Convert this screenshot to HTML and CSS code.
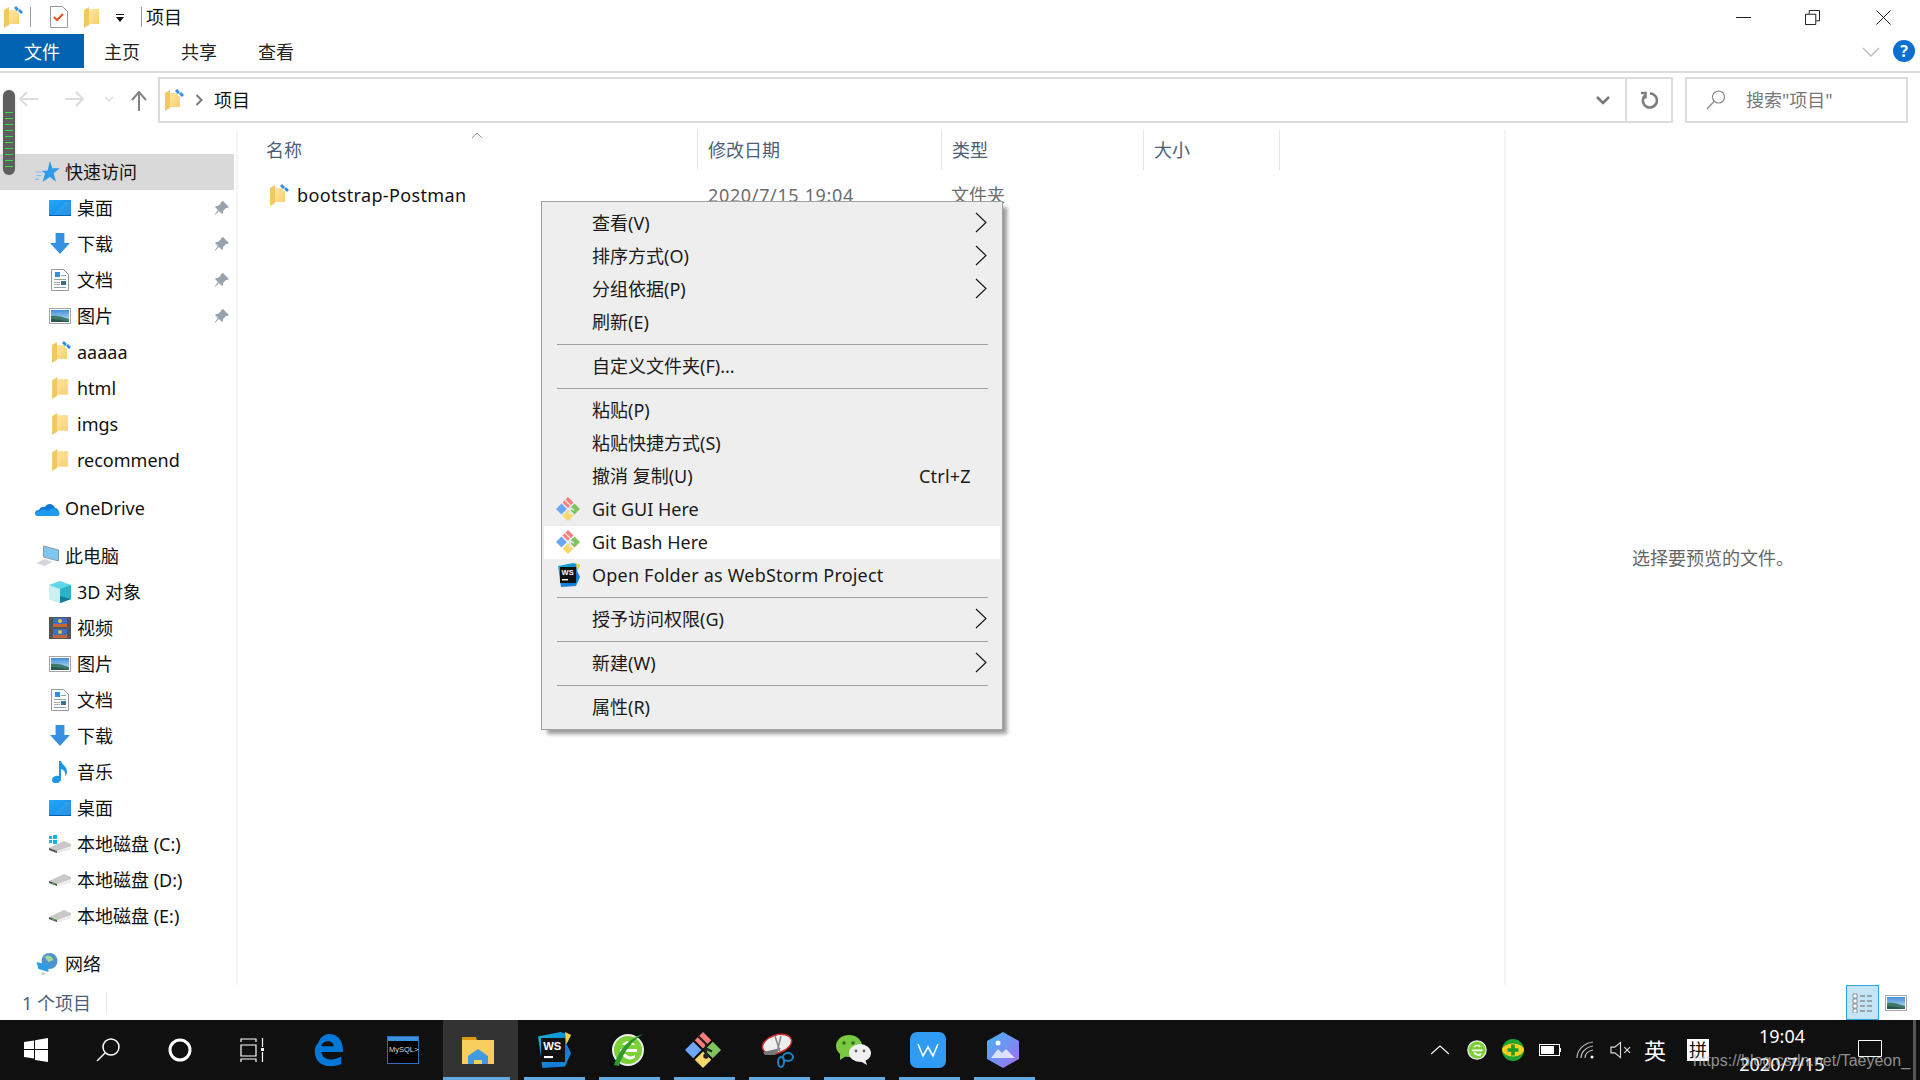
FILE: index.html
```html
<!DOCTYPE html>
<html lang="zh-CN">
<head>
<meta charset="utf-8">
<title>项目</title>
<link rel="stylesheet" href="styles.css">
</head>
<body>
<svg class="defs" width="0" height="0" aria-hidden="true">
  <defs>
    <linearGradient id="fg" x1="0" y1="0" x2="1" y2="1"><stop offset="0" stop-color="#fde6a3"/><stop offset="1" stop-color="#f8d06e"/></linearGradient>
    <linearGradient id="blue" x1="0" y1="0" x2="1" y2="1"><stop offset="0" stop-color="#29a9f5"/><stop offset="1" stop-color="#0a84e8"/></linearGradient>
    <linearGradient id="sky" x1="0" y1="0" x2="0" y2="1"><stop offset="0" stop-color="#3f8ed8"/><stop offset="1" stop-color="#cfe6f2"/></linearGradient>
    <linearGradient id="wsg" x1="0" y1="0" x2="1" y2="1"><stop offset="0" stop-color="#13b6cf"/><stop offset=".7" stop-color="#1478d8"/><stop offset="1" stop-color="#0ca0d8"/></linearGradient>
    <linearGradient id="ph" x1="0" y1="0" x2="1" y2="1"><stop offset="0" stop-color="#3fb6f3"/><stop offset="1" stop-color="#a56cf2"/></linearGradient>
    <symbol id="folder" viewBox="0 0 15 21"><path d="M5 2h10v15H5z" fill="url(#fg)"/><path d="M0 3l5-3v18l-5 3z" fill="#f3c95f"/></symbol>
    <symbol id="qfolder" viewBox="0 0 22 22"><path d="M8 4h8l0 3h2v11H8z" fill="url(#fg)"/><path d="M3 4l5-3v18l-5 3z" fill="#f3c95f"/><path d="M13 2l2-2 3 3-2 2zM17 5l2-2 3 3-2 2z" fill="#2f8fe0"/></symbol>
    <symbol id="pin" viewBox="0 0 16 16"><path d="M9 1l6 6-2 1-1 0-3 3 0 2-1 1-3-3-4 4 0-1 3-4-3-3 1-1 2 0 3-3 0-1z" fill="#98a2ab"/></symbol>
    <symbol id="desk" viewBox="0 0 22 16"><rect width="22" height="16" fill="url(#blue)"/><path d="M0 15h22v1H0z" fill="#075fa8"/><path d="M4 15L16 2h6v13z" fill="#fff" fill-opacity=".08"/></symbol>
    <symbol id="down" viewBox="0 0 20 20"><path d="M6 0h8v9h5l-9 10L1 9h5z" fill="#3590e2"/></symbol>
    <symbol id="doc" viewBox="0 0 18 22"><path d="M.5.5h12l5 5v16H.5z" fill="#fff" stroke="#999"/><path d="M4 3h5v5H4z" fill="#2f8fe0"/><path d="M10 6h5v1h-5zM3 10h12v1H3zM3 18h12v1H3z" fill="#8aa"/><path d="M10 12h5v4h-5z" fill="#3f6f8f"/><path d="M3 13h6v1H3zM3 15h6v1H3z" fill="#aaa"/></symbol>
    <symbol id="pic" viewBox="0 0 22 16"><rect x=".5" y=".5" width="21" height="15" fill="#fff" stroke="#a5a5a5"/><rect x="2" y="2" width="18" height="12" fill="url(#sky)"/><path d="M2 8c5-1 9 0 18 3v3H2z" fill="#3f7a68"/><path d="M2 11c6 0 12 1 18 3H2z" fill="#2c5650"/></symbol>
    <symbol id="star" viewBox="0 0 20 18"><path d="M12 0l2 6h6l-5 4 2 7-5-4-6 4 2-7-3-2h5z" fill="#2e9be8"/><path d="M0 9h5M1 12h4M0 15h3" stroke="#7cc0ef"/></symbol>
    <symbol id="cloud" viewBox="0 0 25 16"><path d="M3 16c-4 0-4-6 1-6 1-3 4-4 6-3 2-4 8-4 10 1 4 0 6 8 1 8z" fill="#0f78d4"/><path d="M3 16c-3-1-3-5 1-5 4-2 7-2 9 0 3-3 6-3 8-1 4 0 5 6 1 6z" fill="#1e9bef"/></symbol>
    <symbol id="pc" viewBox="0 0 24 22"><path d="M8 1l15 4v11L8 12z" fill="#7fc6ee" stroke="#8a9aa5"/><path d="M1 18l8-4 8 3-8 4z" fill="#d2d6da"/></symbol>
    <symbol id="cube" viewBox="0 0 22 22"><path d="M11 0l11 4v14l-11 4-11-4V4z" fill="#5ed6e6"/><path d="M0 4l11 4v14L0 18z" fill="#cdeff3"/><path d="M11 8l11-4v14l-11 4z" fill="#2ab3c9"/><path d="M11 15l11 3-11 4z" fill="#127f96"/></symbol>
    <symbol id="film" viewBox="0 0 22 22"><rect width="22" height="22" fill="#555"/><rect x="4" y="1" width="14" height="9" fill="#3e6fc0"/><rect x="4" y="12" width="14" height="9" fill="#3e6fc0"/><path d="M4 7h14v3H4zM4 18h14v3H4z" fill="#c8643a"/><circle cx="11" cy="4" r="2" fill="#e8c33f"/><circle cx="11" cy="15" r="2" fill="#e8c33f"/></symbol>
    <symbol id="note" viewBox="0 0 18 22"><path d="M8 0h2c1 4 6 5 6 11 0 2-1 3-2 4 1-4-1-6-4-7v10c0 5-9 6-9 1 0-3 4-5 7-4z" fill="#1e96e6"/></symbol>
    <symbol id="disk" viewBox="0 0 22 12"><path d="M0 7l15-7 7 3v5l-14 4-8-3z" fill="#c8c8c8"/><path d="M0 7l8 3v2l-8-3z" fill="#555"/><path d="M8 10l14-5v3L8 12z" fill="#eee"/><path d="M3 9l3 1" stroke="#3c3"/></symbol>
    <symbol id="diskc" viewBox="0 0 22 18"><path d="M0 13l15-7 7 3v5l-14 4-8-3z" fill="#c8c8c8"/><path d="M0 13l8 3v2l-8-3z" fill="#555"/><path d="M8 16l14-5v3L8 18z" fill="#eee"/><path d="M0 1h3v3H0zM4 0h4v4H4zM0 5h3v3H0zM4 5h4v4H4z" fill="#0fb4f0"/></symbol>
    <symbol id="net" viewBox="0 0 22 22"><circle cx="13" cy="8" r="8" fill="#4a93d0"/><path d="M8 4c4-3 7-1 9 3l-5 2z" fill="#a6d596"/><path d="M0 9l12 3v7L2 16z" fill="#2e9be8"/><path d="M5 19l4 1v2H5z" fill="#c9d2d8"/></symbol>
    <symbol id="git" viewBox="0 0 24 24"><path d="M12 0l5.500 5.500L12 11 6.500 5.500z" fill="#f77d79"/><path d="M18.500 6.500L24 12l-5.500 5.500L13 12z" fill="#7fc45f"/><path d="M12 13l5.500 5.500L12 24l-5.500-5.500z" fill="#f6d769"/><path d="M5.500 6.500L11 12l-5.500 5.500L0 12z" fill="#6ea6f7"/><path d="M9 3l5 5v8M14 11l4 2" fill="none" stroke="#e9e9e9" stroke-width="1.400"/><circle cx="14" cy="16" r="1.500" fill="#e9e9e9"/></symbol>
    <symbol id="gitd" viewBox="0 0 24 24"><path d="M12 0l5.500 5.500L12 11 6.500 5.500z" fill="#f77d79"/><path d="M18.500 6.500L24 12l-5.500 5.500L13 12z" fill="#7fc45f"/><path d="M12 13l5.500 5.500L12 24l-5.500-5.500z" fill="#f6d769"/><path d="M5.500 6.500L11 12l-5.500 5.500L0 12z" fill="#6ea6f7"/><path d="M9 3l5 5v8M14 11l4 2" fill="none" stroke="#222" stroke-width="1.500"/><circle cx="14" cy="16" r="1.800" fill="#222"/></symbol>
    <symbol id="ws" viewBox="0 0 24 24"><path d="M2 3l15-3 7 2-3 6 3 6-4 9-15 1z" fill="url(#wsg)"/><path d="M20 0l4 2-3 6z" fill="#f5d13a"/><rect x="4" y="4" width="16" height="16" fill="#111"/><text x="5.500" y="12" font-size="7.500" font-weight="700" fill="#fff" font-family="Liberation Sans">WS</text><rect x="6" y="16" width="6" height="1.400" fill="#fff"/></symbol>
  </defs>
</svg>

<div class="window">
  <header class="titlebar">
    <svg class="ic-q"><use href="#qfolder"/></svg>
    <i class="tsep"></i>
    <svg class="ic-check" viewBox="0 0 18 22"><path d="M.5.5h12l5 5v16H.5z" fill="#fff" stroke="#999"/><path d="M4 11l3 3 6-6" fill="none" stroke="#e8501f" stroke-width="2"/></svg>
    <svg class="ic-tf"><use href="#folder"/></svg>
    <svg class="ic-drop" viewBox="0 0 10 9"><path d="M1 0h8v1H1zM1 3h8L5 8z" fill="#111"/></svg>
    <i class="tsep tsep2"></i>
    <span class="wtitle">项目</span>
    <div class="winctl">
      <svg viewBox="0 0 16 16"><path d="M0 8h16" stroke="#111"/></svg>
      <svg class="ctl-mid" viewBox="0 0 16 16"><path d="M.5 4.500h11v11H.5zM4.500 4V.5h11v11H12" fill="none" stroke="#111"/></svg>
      <svg viewBox="0 0 16 16"><path d="M.5.5l15 15M15.500.5l-15 15" stroke="#111"/></svg>
    </div>
  </header>

  <nav class="ribbon">
    <span class="tab tab-file">文件</span>
    <span class="tab">主页</span>
    <span class="tab">共享</span>
    <span class="tab">查看</span>
    <svg class="rib-chev" viewBox="0 0 18 11"><path d="M1 1l8 8 8-8" fill="none" stroke="#bdbdbd" stroke-width="1.500"/></svg>
    <span class="help">?</span>
  </nav>

  <div class="navbar">
    <svg class="nb nb-back" viewBox="0 0 20 16"><path d="M9 1L2 8l7 7M2 8h18" fill="none" stroke="#dcdcdc" stroke-width="2"/></svg>
    <svg class="nb nb-fwd" viewBox="0 0 20 16"><path d="M11 1l7 7-7 7M18 8H0" fill="none" stroke="#dcdcdc" stroke-width="2"/></svg>
    <svg class="nb nb-dn" viewBox="0 0 10 7"><path d="M1 1l4 4 4-4" fill="none" stroke="#dcdcdc" stroke-width="1.500"/></svg>
    <svg class="nb nb-up" viewBox="0 0 16 20"><path d="M1 9l7-8 7 8M8 1v19" fill="none" stroke="#848484" stroke-width="2"/></svg>
    <div class="addr">
      <svg class="addr-ic"><use href="#qfolder"/></svg>
      <svg class="addr-chev" viewBox="0 0 8 12"><path d="M1.500 1l5 5-5 5" fill="none" stroke="#777" stroke-width="2"/></svg>
      <span class="addr-txt">项目</span>
      <svg class="addr-dn" viewBox="0 0 14 9"><path d="M1 1l6 6 6-6" fill="none" stroke="#777" stroke-width="2.500"/></svg>
      <span class="addr-btn"><svg viewBox="0 0 18 18" class="refresh"><path d="M1 2h4.500v5.500M5 4.500a7 7 0 1 0 5-2" fill="none" stroke="#7d7d7d" stroke-width="2.600"/></svg></span>
    </div>
    <div class="search">
      <svg class="search-ic" viewBox="0 0 20 20"><circle cx="12.500" cy="7" r="6" fill="none" stroke="#888" stroke-width="1.200"/><path d="M8 11.500L1 19" stroke="#888" stroke-width="1.200"/></svg>
      <span class="search-txt">搜索"项目"</span>
    </div>
  </div>

  <div class="main">
    <aside class="side">
      <div class="row lv1 sel"><svg class="ri star"><use href="#star"/></svg>快速访问</div>
      <div class="row lv2"><svg class="ri"><use href="#desk"/></svg>桌面<svg class="pin"><use href="#pin"/></svg></div>
      <div class="row lv2"><svg class="ri"><use href="#down"/></svg>下载<svg class="pin"><use href="#pin"/></svg></div>
      <div class="row lv2"><svg class="ri"><use href="#doc"/></svg>文档<svg class="pin"><use href="#pin"/></svg></div>
      <div class="row lv2"><svg class="ri"><use href="#pic"/></svg>图片<svg class="pin"><use href="#pin"/></svg></div>
      <div class="row lv2"><svg class="ri"><use href="#qfolder"/></svg>aaaaa</div>
      <div class="row lv2"><svg class="ri"><use href="#folder"/></svg>html</div>
      <div class="row lv2"><svg class="ri"><use href="#folder"/></svg>imgs</div>
      <div class="row lv2"><svg class="ri"><use href="#folder"/></svg>recommend</div>
      <div class="row lv1 gap"><svg class="ri"><use href="#cloud"/></svg>OneDrive</div>
      <div class="row lv1 gap"><svg class="ri"><use href="#pc"/></svg>此电脑</div>
      <div class="row lv2"><svg class="ri"><use href="#cube"/></svg>3D 对象</div>
      <div class="row lv2"><svg class="ri"><use href="#film"/></svg>视频</div>
      <div class="row lv2"><svg class="ri"><use href="#pic"/></svg>图片</div>
      <div class="row lv2"><svg class="ri"><use href="#doc"/></svg>文档</div>
      <div class="row lv2"><svg class="ri"><use href="#down"/></svg>下载</div>
      <div class="row lv2"><svg class="ri"><use href="#note"/></svg>音乐</div>
      <div class="row lv2"><svg class="ri"><use href="#desk"/></svg>桌面</div>
      <div class="row lv2"><svg class="ri"><use href="#diskc"/></svg>本地磁盘 (C:)</div>
      <div class="row lv2"><svg class="ri"><use href="#disk"/></svg>本地磁盘 (D:)</div>
      <div class="row lv2"><svg class="ri"><use href="#disk"/></svg>本地磁盘 (E:)</div>
      <div class="row lv1 gap"><svg class="ri"><use href="#net"/></svg>网络</div>
    </aside>

    <section class="files">
      <div class="cols">
        <span class="col c-name">名称<svg class="sort" viewBox="0 0 12 6"><path d="M1 6l5-5 5 5" fill="none" stroke="#9a9a9a"/></svg></span>
        <span class="col c-date">修改日期</span>
        <span class="col c-type">类型</span>
        <span class="col c-size">大小</span>
      </div>
      <div class="frow">
        <span class="f-name"><svg class="ri"><use href="#qfolder"/></svg>bootstrap-Postman</span>
        <span class="f-date">2020/7/15 19:04</span>
        <span class="f-type">文件夹</span>
      </div>
    </section>

    <section class="preview">选择要预览的文件。</section>
  </div>

  <footer class="status">
    <span class="count">1 个项目</span>
    <i class="ssep"></i>
    <span class="viewbtn on"><svg viewBox="0 0 22 20"><path d="M1 1h4v4H1zM1 6h4v4H1zM1 11h4v4H1zM1 16h4v4H1z" fill="#fff" stroke="#777" stroke-width=".8"/><path d="M8 3h5M15 3h5M8 8h5M15 8h5M8 13h5M15 13h5M8 18h5M15 18h5" stroke="#666" stroke-width="1.200"/></svg></span>
    <svg class="viewpic"><use href="#pic"/></svg>
  </footer>

  <div class="taskbar">
    <span class="sys"><svg class="win" viewBox="0 0 24 24"><path d="M0 4l10-1.500V11H0zM11 2.300L24 0v11H11zM0 12h10v8.500L0 19zM11 12h13v12l-13-2z" fill="#fff"/></svg></span>
    <span class="sys"><svg class="t22" viewBox="0 0 24 24"><circle cx="15" cy="9" r="8" fill="none" stroke="#fff" stroke-width="1.500"/><path d="M9 15l-8 8" stroke="#fff" stroke-width="1.500"/></svg></span>
    <span class="sys"><svg class="t24" viewBox="0 0 24 24"><circle cx="12" cy="12" r="10" fill="none" stroke="#fff" stroke-width="3"/></svg></span>
    <span class="sys"><svg class="t24" viewBox="0 0 24 24"><path d="M1 4V1h15v3M1 7h15v11H1zM1 24v-3h15v3M22.500 0v9M22.500 14v10" fill="none" stroke="#fff" stroke-width="1.200"/><rect x="21" y="10" width="3" height="3" fill="#fff"/></svg></span>
    <i class="tgap"></i>
    <span class="app"><svg class="a34" viewBox="0 0 32 34"><path d="M17 0c10 0 15 7 15 19H9c1 9 13 10 21 5v8c-12 5-27 2-28-12C1 12 7 7 13 7 7 10 5 13 4 16 5 7 10 0 17 0zM9 13h13c0-7-12-7-13 0z" fill="#0078d7"/></svg></span>
    <span class="app"><svg class="a34" viewBox="0 0 32 28"><rect x=".5" y=".5" width="31" height="27" fill="#000" stroke="#2c6db8"/><rect x="1" y="1" width="30" height="4" fill="#3f8fe0"/><text x="2" y="16" font-size="7.500" fill="#ddd" font-family="Liberation Sans">MySQL&gt;</text></svg></span>
    <span class="app open active"><svg class="a34" viewBox="0 0 32 28"><path d="M0 1h14l1 3H0z" fill="#d99a14"/><path d="M0 4h32v24H0z" fill="#f8cf5e"/><path d="M6 20l10-7 10 7v8h-6v-4h-8v4H6z" fill="#3f9ae0"/></svg></span>
    <span class="app open"><svg class="a36" viewBox="0 0 24 24"><use href="#ws"/></svg></span>
    <span class="app open"><svg class="a36" viewBox="0 0 34 36"><circle cx="17" cy="18" r="15" fill="#7bd137" stroke="#eee" stroke-width="2"/><path d="M9 17h17v3H9zM11 13c3-5 10-5 13 0h-3c-2-2-5-2-7 0zM11 22h4c2 3 6 3 9 1v3c-5 3-11 1-13-4z" fill="#fff"/><path d="M3 33C8 18 18 6 32 2 22 8 12 20 8 34z" fill="#2e9b2a"/></svg></span>
    <span class="app open"><svg class="a36" viewBox="0 0 24 24"><use href="#gitd"/></svg></span>
    <span class="app open"><svg class="a36" viewBox="0 0 34 36"><ellipse cx="16" cy="12" rx="15" ry="9" transform="rotate(-18 16 12)" fill="#eee" stroke="#d22b2b" stroke-width="1.500"/><path d="M2 20l18-4-6 7H4z" fill="#777"/><path d="M14 4l5 16M20 4l-4 16" stroke="#888" stroke-width="1.500"/><ellipse cx="27" cy="25" rx="5" ry="4" fill="none" stroke="#1a84c8" stroke-width="2"/><ellipse cx="20" cy="30" rx="3" ry="5" fill="none" stroke="#1a84c8" stroke-width="2"/></svg></span>
    <span class="app open"><svg class="a36" viewBox="0 0 36 32"><ellipse cx="14" cy="12" rx="13" ry="11" fill="#7ac943"/><path d="M5 20l0 6 6-4z" fill="#7ac943"/><circle cx="9" cy="9" r="1.700" fill="#356b1c"/><circle cx="18" cy="9" r="1.700" fill="#356b1c"/><ellipse cx="25" cy="19" rx="11" ry="9" fill="#f0f0f0"/><path d="M30 25l2 6-7-4z" fill="#f0f0f0"/><circle cx="21" cy="17" r="1.400" fill="#666"/><circle cx="29" cy="17" r="1.400" fill="#666"/></svg></span>
    <span class="app open"><svg class="a36" viewBox="0 0 36 36"><rect width="36" height="36" rx="7" fill="#2f9bf5"/><path d="M8 12l5 12 5-9 5 9 5-12" fill="none" stroke="#fff" stroke-width="1.600"/></svg></span>
    <span class="app open"><svg class="a36" viewBox="0 0 32 36"><path d="M16 0l16 9v18l-16 9-16-9V9z" fill="url(#ph)"/><circle cx="11" cy="11" r="2.500" fill="#fff"/><path d="M4 26l7-9 4 4 4-4 9 9z" fill="#fff" fill-opacity=".75"/></svg></span>
    <div class="tray">
      <svg class="tr-chev" viewBox="0 0 18 10"><path d="M0 9l9-8 9 8" fill="none" stroke="#fff" stroke-width="1.200"/></svg>
      <svg class="tr-i" viewBox="0 0 34 36"><circle cx="17" cy="18" r="15" fill="#7bd137" stroke="#eee" stroke-width="2"/><path d="M9 17h17v3H9zM11 13c3-5 10-5 13 0h-3c-2-2-5-2-7 0zM11 22h4c2 3 6 3 9 1v3c-5 3-11 1-13-4z" fill="#fff"/></svg>
      <svg class="tr-i" viewBox="0 0 24 24"><circle cx="12" cy="12" r="12" fill="#1fa52f"/><ellipse cx="12" cy="12" rx="12" ry="7" fill="#f5cf1e"/><path d="M10 6h4v4h4v4h-4v4h-4v-4H6v-4h4z" fill="#1c9a2c"/></svg>
      <svg class="tr-bat" viewBox="0 0 22 12"><rect x=".5" y=".5" width="20" height="11" fill="none" stroke="#fff"/><rect x="2" y="2" width="13" height="8" fill="#fff"/><rect x="21" y="4" width="1" height="4" fill="#fff"/></svg>
      <svg class="tr-wifi" viewBox="0 0 18 18"><path d="M1 17C1 9 8 2 17 1M5 17c0-6 5-11 12-12M9 17c0-4 3-7 8-8" fill="none" stroke="#bbb" stroke-width="1.200"/><circle cx="16" cy="16" r="1.500" fill="#fff"/></svg>
      <svg class="tr-vol" viewBox="0 0 22 18"><path d="M1 6h4l6-5v16l-6-5H1z" fill="none" stroke="#ddd" stroke-width="1.200"/><path d="M15 6l6 6M21 6l-6 6" stroke="#ddd" stroke-width="1.200"/></svg>
      <span class="tr-lang">英</span>
      <span class="tr-pin">拼</span>
      <div class="clock"><span>19:04</span><span>2020/7/15</span></div>
      <svg class="tr-note" viewBox="0 0 24 20"><path d="M.5.5h23v16h-23z" fill="none" stroke="#fff"/></svg>
      <i class="showdesk"></i>
    </div>
  </div>
</div>

<div class="hscroll"><i></i></div>

<div class="menu">
  <div class="mi">查看(V)<svg class="arr"><path d="M1 1l10 9.500L1 20" fill="none" stroke="#111" stroke-width="1.100"/></svg></div>
  <div class="mi">排序方式(O)<svg class="arr"><path d="M1 1l10 9.500L1 20" fill="none" stroke="#111" stroke-width="1.100"/></svg></div>
  <div class="mi">分组依据(P)<svg class="arr"><path d="M1 1l10 9.500L1 20" fill="none" stroke="#111" stroke-width="1.100"/></svg></div>
  <div class="mi">刷新(E)</div>
  <hr class="msep">
  <div class="mi">自定义文件夹(F)...</div>
  <hr class="msep">
  <div class="mi">粘贴(P)</div>
  <div class="mi">粘贴快捷方式(S)</div>
  <div class="mi">撤消 复制(U)<span class="short">Ctrl+Z</span></div>
  <div class="mi"><svg class="mic"><use href="#git"/></svg>Git GUI Here</div>
  <div class="mi hover"><svg class="mic"><use href="#git"/></svg>Git Bash Here</div>
  <div class="mi mi-wide"><svg class="mic"><use href="#ws"/></svg>Open Folder as WebStorm Project</div>
  <hr class="msep">
  <div class="mi">授予访问权限(G)<svg class="arr"><path d="M1 1l10 9.500L1 20" fill="none" stroke="#111" stroke-width="1.100"/></svg></div>
  <hr class="msep">
  <div class="mi">新建(W)<svg class="arr"><path d="M1 1l10 9.500L1 20" fill="none" stroke="#111" stroke-width="1.100"/></svg></div>
  <hr class="msep">
  <div class="mi">属性(R)</div>
</div>

<div class="watermark">https://blog.csdn.net/Taeyeon_</div>
</body>
</html>
```
FILE: styles.css
```css
* { box-sizing: border-box; }
html, body { margin: 0; padding: 0; }
body {
  width: 1920px; height: 1080px; overflow: hidden; position: relative; background: #fff;
  font-family: "Noto Sans", "Noto Sans CJK SC", sans-serif; font-size: 18px; color: #111;
}
svg { display: block; flex: none; }
.defs { position: absolute; }
.window { width: 1920px; height: 1080px; display: flex; flex-direction: column; }

/* title bar */
.titlebar { height: 34px; display: flex; align-items: center; flex: none; }
.ic-q { width: 22px; height: 22px; margin-left: 1px; }
.tsep { width: 1px; height: 20px; background: #999; margin-left: 7px; }
.ic-check { width: 18px; height: 22px; margin-left: 19px; }
.ic-tf { width: 15px; height: 21px; margin-left: 16px; }
.ic-drop { width: 10px; height: 9px; margin-left: 16px; margin-top: 2px; }
.tsep2 { margin-left: 16px; }
.wtitle { margin-left: 4px; font-size: 18px; line-height: 34px; }
.winctl { margin-left: auto; display: flex; gap: 54px; padding-right: 29px; }
.winctl svg { width: 15px; height: 15px; }
.winctl .ctl-mid { margin-right: 2px; }

/* ribbon */
.ribbon { height: 39px; display: flex; align-items: flex-start; flex: none; border-bottom: 2px solid #dcdcdc; padding-bottom: 3px; position: relative; }
.tab { height: 34px; line-height: 36px; padding: 0 20px; margin-right: 1px; color: #222; }
.tab-file { width: 84px; padding: 0 24px; background: #0063b1; color: #fff; margin-right: 0; }
.rib-chev { width: 18px; height: 11px; margin: 13px 0 0 auto; }
.help { width: 22px; height: 22px; border-radius: 50%; background: #0a6fd0; color: #fff; margin: 6px 5px 0 13px; font-size: 16px; font-weight: 700; line-height: 22px; text-align: center; }

/* nav */
.navbar { height: 57px; flex: none; display: flex; align-items: flex-start; padding-top: 4px; position: relative; }
.nb { margin-top: 14px; }
.nb-back { width: 20px; height: 16px; margin-left: 18px; }
.nb-fwd { width: 20px; height: 16px; margin-left: 27px; }
.nb-dn { width: 10px; height: 7px; margin: 19px 0 0 19px; }
.nb-up { width: 16px; height: 20px; margin: 14px 0 0 17px; }
.addr { width: 1515px; height: 46px; margin-left: 11px; border: 2px solid #dcdcdc; display: flex; align-items: center; }
.addr-ic { width: 22px; height: 22px; margin-left: 2px; }
.addr-chev { width: 8px; height: 12px; margin-left: 11px; }
.addr-txt { margin-left: 11px; margin-bottom: 2px; }
.addr-dn { width: 14px; height: 9px; margin-left: auto; }
.addr-btn { width: 46px; height: 42px; margin-left: 15px; border-left: 2px solid #dcdcdc; display: flex; align-items: center; justify-content: center; }
.refresh { width: 18px; height: 18px; }
.search { width: 223px; height: 46px; margin-left: 12px; border: 2px solid #dcdcdc; display: flex; align-items: center; color: #777; }
.search-ic { width: 20px; height: 20px; margin: 0 20px 0 19px; }
.search-txt { margin-bottom: 2px; }

/* main */
.main { flex: 1; display: flex; min-height: 0; }
.side { width: 238px; flex: none; border-right: 2px solid #f5f5f5; padding-top: 24px; }
.row { height: 36px; display: flex; align-items: center; line-height: 36px; position: relative; white-space: nowrap; color: #111; }
.row .ri { width: 22px; height: 22px; }
.lv1 { padding-left: 38px; }
.lv1 .ri { margin-right: 5px; margin-left: -3px; width: 25px; }
.lv2 { padding-left: 49px; }
.lv2 .ri { margin-right: 6px; }
.sel { background: #d9d9d9; width: 234px; }
.gap { margin-top: 12px; }
.pin { width: 16px; height: 16px; position: absolute; left: 214px; top: 10px; }

.files { width: 1268px; flex: none; border-right: 2px solid #f5f5f5; }
.cols { height: 40px; display: flex; margin-bottom: 6px; position: relative; }
.col { height: 40px; line-height: 41px; color: #4c607a; border-right: 1px solid #e5e5e5; padding-left: 10px; }
.c-name { width: 460px; padding-left: 28px; position: relative; }
.c-date { width: 244px; }
.c-type { width: 202px; }
.c-size { width: 136px; }
.sort { position: absolute; left: 233px; top: 2px; width: 12px; height: 6px; }
.frow { height: 36px; display: flex; align-items: center; line-height: 36px; padding-top: 1px; }
.f-name { width: 460px; padding-left: 29px; display: flex; align-items: center; letter-spacing: .35px; }
.f-name .ri { width: 22px; height: 22px; margin-right: 8px; }
.f-date { width: 244px; padding-left: 10px; color: #6d6d6d; letter-spacing: .65px; }
.f-type { padding-left: 9px; color: #6d6d6d; }

.preview { flex: 1; display: flex; align-items: center; justify-content: center; padding: 0 0 2px 0; color: #666; font-size: 18px; }

/* status */
.status { height: 35px; flex: none; display: flex; align-items: center; position: relative; padding-left: 22px; padding-right: 13px; }
.count { color: #4c607a; margin-bottom: 2px; }
.ssep { width: 1px; height: 22px; background: #e8e8e8; margin-left: 15px; }
.viewbtn { width: 33px; height: 35px; margin-left: auto; background: #c5e5f7; border: 1px solid #2aa4e4; display: flex; align-items: center; justify-content: center; }
.viewbtn svg { width: 22px; height: 20px; }
.viewpic { width: 22px; height: 16px; margin-left: 6px; }

/* taskbar */
.taskbar { height: 60px; flex: none; background: #101010; display: flex; align-items: center; position: relative; }
.sys { width: 72px; height: 60px; display: flex; align-items: center; justify-content: center; }
.win { width: 24px; height: 24px; }
.t22 { width: 24px; height: 24px; }
.t24 { width: 24px; height: 24px; }
.tgap { width: 5px; }
.app { width: 75px; height: 60px; display: flex; align-items: center; justify-content: center; position: relative; padding-right: 5px; }
.a34 { width: 32px; height: 32px; }
.a36 { width: 36px; height: 36px; }
.open::after { content: ""; position: absolute; left: 6px; right: 8px; bottom: 0; height: 3px; background: #64a8e0; }
.active { background: #333; }
.active::after { left: 0; right: 8px; }
.tray { margin-left: auto; height: 60px; display: flex; align-items: center; color: #fff; padding-right: 4px; }
.tr-chev { width: 18px; height: 10px; margin-right: 17px; }
.tr-i { width: 22px; height: 22px; margin-right: 14px; }
.tr-bat { width: 22px; height: 12px; margin-left: 1px; margin-right: 15px; }
.tr-wifi { width: 18px; height: 18px; margin-right: 16px; }
.tr-vol { width: 21px; height: 18px; margin-right: 12px; }
.tr-lang { font-size: 22px; width: 24px; text-align: center; margin-right: 20px; line-height: 60px; }
.tr-pin { width: 22px; height: 22px; background: #fff; color: #111; font-size: 18px; line-height: 22px; text-align: center; margin-right: 23px; }
.clock { width: 100px; display: flex; flex-direction: column; align-items: center; line-height: 28px; font-size: 18px; margin-right: 26px; }
.tr-note { width: 24px; height: 20px; margin-right: 31px; }
.showdesk { width: 3px; height: 60px; background: #555; }

/* floating widget */
.hscroll { position: absolute; left: 3px; top: 90px; width: 12px; height: 85px; border-radius: 6px; background: #5e5e5e; padding: 22px 2px 4px; box-shadow: 0 0 3px #ccc; }
.hscroll i { display: block; height: 100%; background: repeating-linear-gradient(#36d94a 0 1px, transparent 1px 6px); }

/* context menu */
.menu { position: absolute; left: 541px; top: 201px; width: 462px; height: 529px; background: #eee; border: 1px solid #a0a0a0; box-shadow: 5px 5px 4px -1px #999; padding: 5px 2px; font-size: 18px; }
.mi { height: 33px; line-height: 33px; padding-left: 48px; position: relative; white-space: nowrap; color: #1a1a1a; }
.mi-wide { letter-spacing: .2px; }
.hover { background: #fff; }
.arr { position: absolute; left: 431px; top: 5px; width: 13px; height: 22px; }
.short { position: absolute; left: 375px; letter-spacing: .2px; }
.mic { position: absolute; left: 12px; top: 4px; width: 24px; height: 24px; }
.msep { height: 1px; margin: 5px 13px; border: 0; background: #a0a0a0; width: 431px; }

.watermark { position: absolute; left: 1693px; top: 1049px; font-family: "Liberation Sans", sans-serif; font-size: 16px; line-height: 24px; color: rgba(200, 200, 200, .7); white-space: nowrap; }
```
